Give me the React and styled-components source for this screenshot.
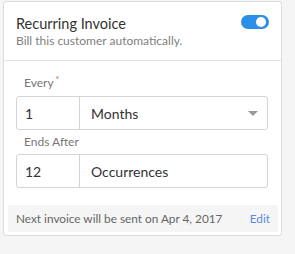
import React, { useState } from 'react';
import styled, { createGlobalStyle } from 'styled-components';

const GlobalStyle = createGlobalStyle`
  body {
    margin: 0;
    background: #f5f5f5;
    font-family: Lato, "Open Sans", Arial, sans-serif;
  }
`;

const Page = styled.div`
  padding: 1px 0 0 3px;
  height: 254px;
  box-sizing: border-box;
`;

const Card = styled.div`
  width: 279px;
  box-sizing: border-box;
  background: #fff;
  border: 1px solid #dcdcdc;
  border-radius: 3px;
  padding-bottom: 3px;
`;

const Header = styled.div`
  display: flex;
  justify-content: space-between;
  align-items: flex-start;
  height: 59px;
  box-sizing: border-box;
  padding: 13px 12px 0 12px;
  border-bottom: 1px solid #e3e3e3;
`;

const Title = styled.div`
  font-size: 14.5px;
  color: #333;
  line-height: 18px;
`;

const Sub = styled.div`
  font-size: 12px;
  color: #808080;
  line-height: 16px;
`;

const Toggle = styled.div`
  width: 28px;
  height: 14px;
  border-radius: 7px;
  background: ${p => (p.on ? '#2d8ee8' : '#ccc')};
  position: relative;
  cursor: pointer;
  &::after {
    content: '';
    position: absolute;
    top: 2px;
    left: ${p => (p.on ? '15px' : '2px')};
    width: 10px;
    height: 10px;
    border-radius: 50%;
    background: #fff;
  }
`;

const Body = styled.div`
  padding: 15px 13px 0 12px;
`;

const Label = styled.div`
  font-size: 12px;
  color: #777;
  line-height: 14px;
  padding-left: 8px;
  margin-bottom: 5px;
`;

const Required = styled.span`
  color: #e45454;
  font-size: 9px;
  margin-left: 2px;
  position: relative;
  top: -4px;
`;

const Group = styled.div`
  display: flex;
  height: 34px;
  border: 1px solid #d4d4d4;
  border-radius: 3px;
  box-sizing: border-box;
  margin-bottom: ${p => p.gap || 0}px;
`;

const Num = styled.div`
  width: 63px;
  border-right: 1px solid #d4d4d4;
  display: flex;
  align-items: center;
  padding-left: 8px;
  box-sizing: border-box;
  font-size: 14px;
  color: #333;
`;

const Unit = styled.div`
  flex: 1;
  display: flex;
  align-items: center;
  justify-content: space-between;
  padding: 0 9px 0 11px;
  font-size: 14px;
  color: #333;
`;

const Caret = styled.span`
  width: 0;
  height: 0;
  border-left: 5px solid transparent;
  border-right: 5px solid transparent;
  border-top: 5px solid #999;
`;

const Footer = styled.div`
  margin: 17px 3px 0 4px;
  height: 27px;
  background: #f5f5f5;
  display: flex;
  align-items: center;
  justify-content: space-between;
  padding: 0 8px 0 8px;
  font-size: 11.8px;
  color: #666;
`;

const EditLink = styled.span`
  color: #5a8be0;
  cursor: pointer;
`;

export default function App() {
  const [on, setOn] = useState(true);
  return (
    <Page>
      <GlobalStyle />
      <Card>
        <Header>
          <div>
            <Title>Recurring Invoice</Title>
            <Sub>Bill this customer automatically.</Sub>
          </div>
          <Toggle on={on} onClick={() => setOn(!on)} />
        </Header>
        <Body>
          <Label>Every<Required>*</Required></Label>
          <Group gap={5}>
            <Num>1</Num>
            <Unit>
              <span>Months</span>
              <Caret />
            </Unit>
          </Group>
          <Label>Ends After</Label>
          <Group>
            <Num>12</Num>
            <Unit>
              <span>Occurrences</span>
            </Unit>
          </Group>
        </Body>
        <Footer>
          <span>Next invoice will be sent on Apr 4, 2017</span>
          <EditLink>Edit</EditLink>
        </Footer>
      </Card>
    </Page>
  );
}
